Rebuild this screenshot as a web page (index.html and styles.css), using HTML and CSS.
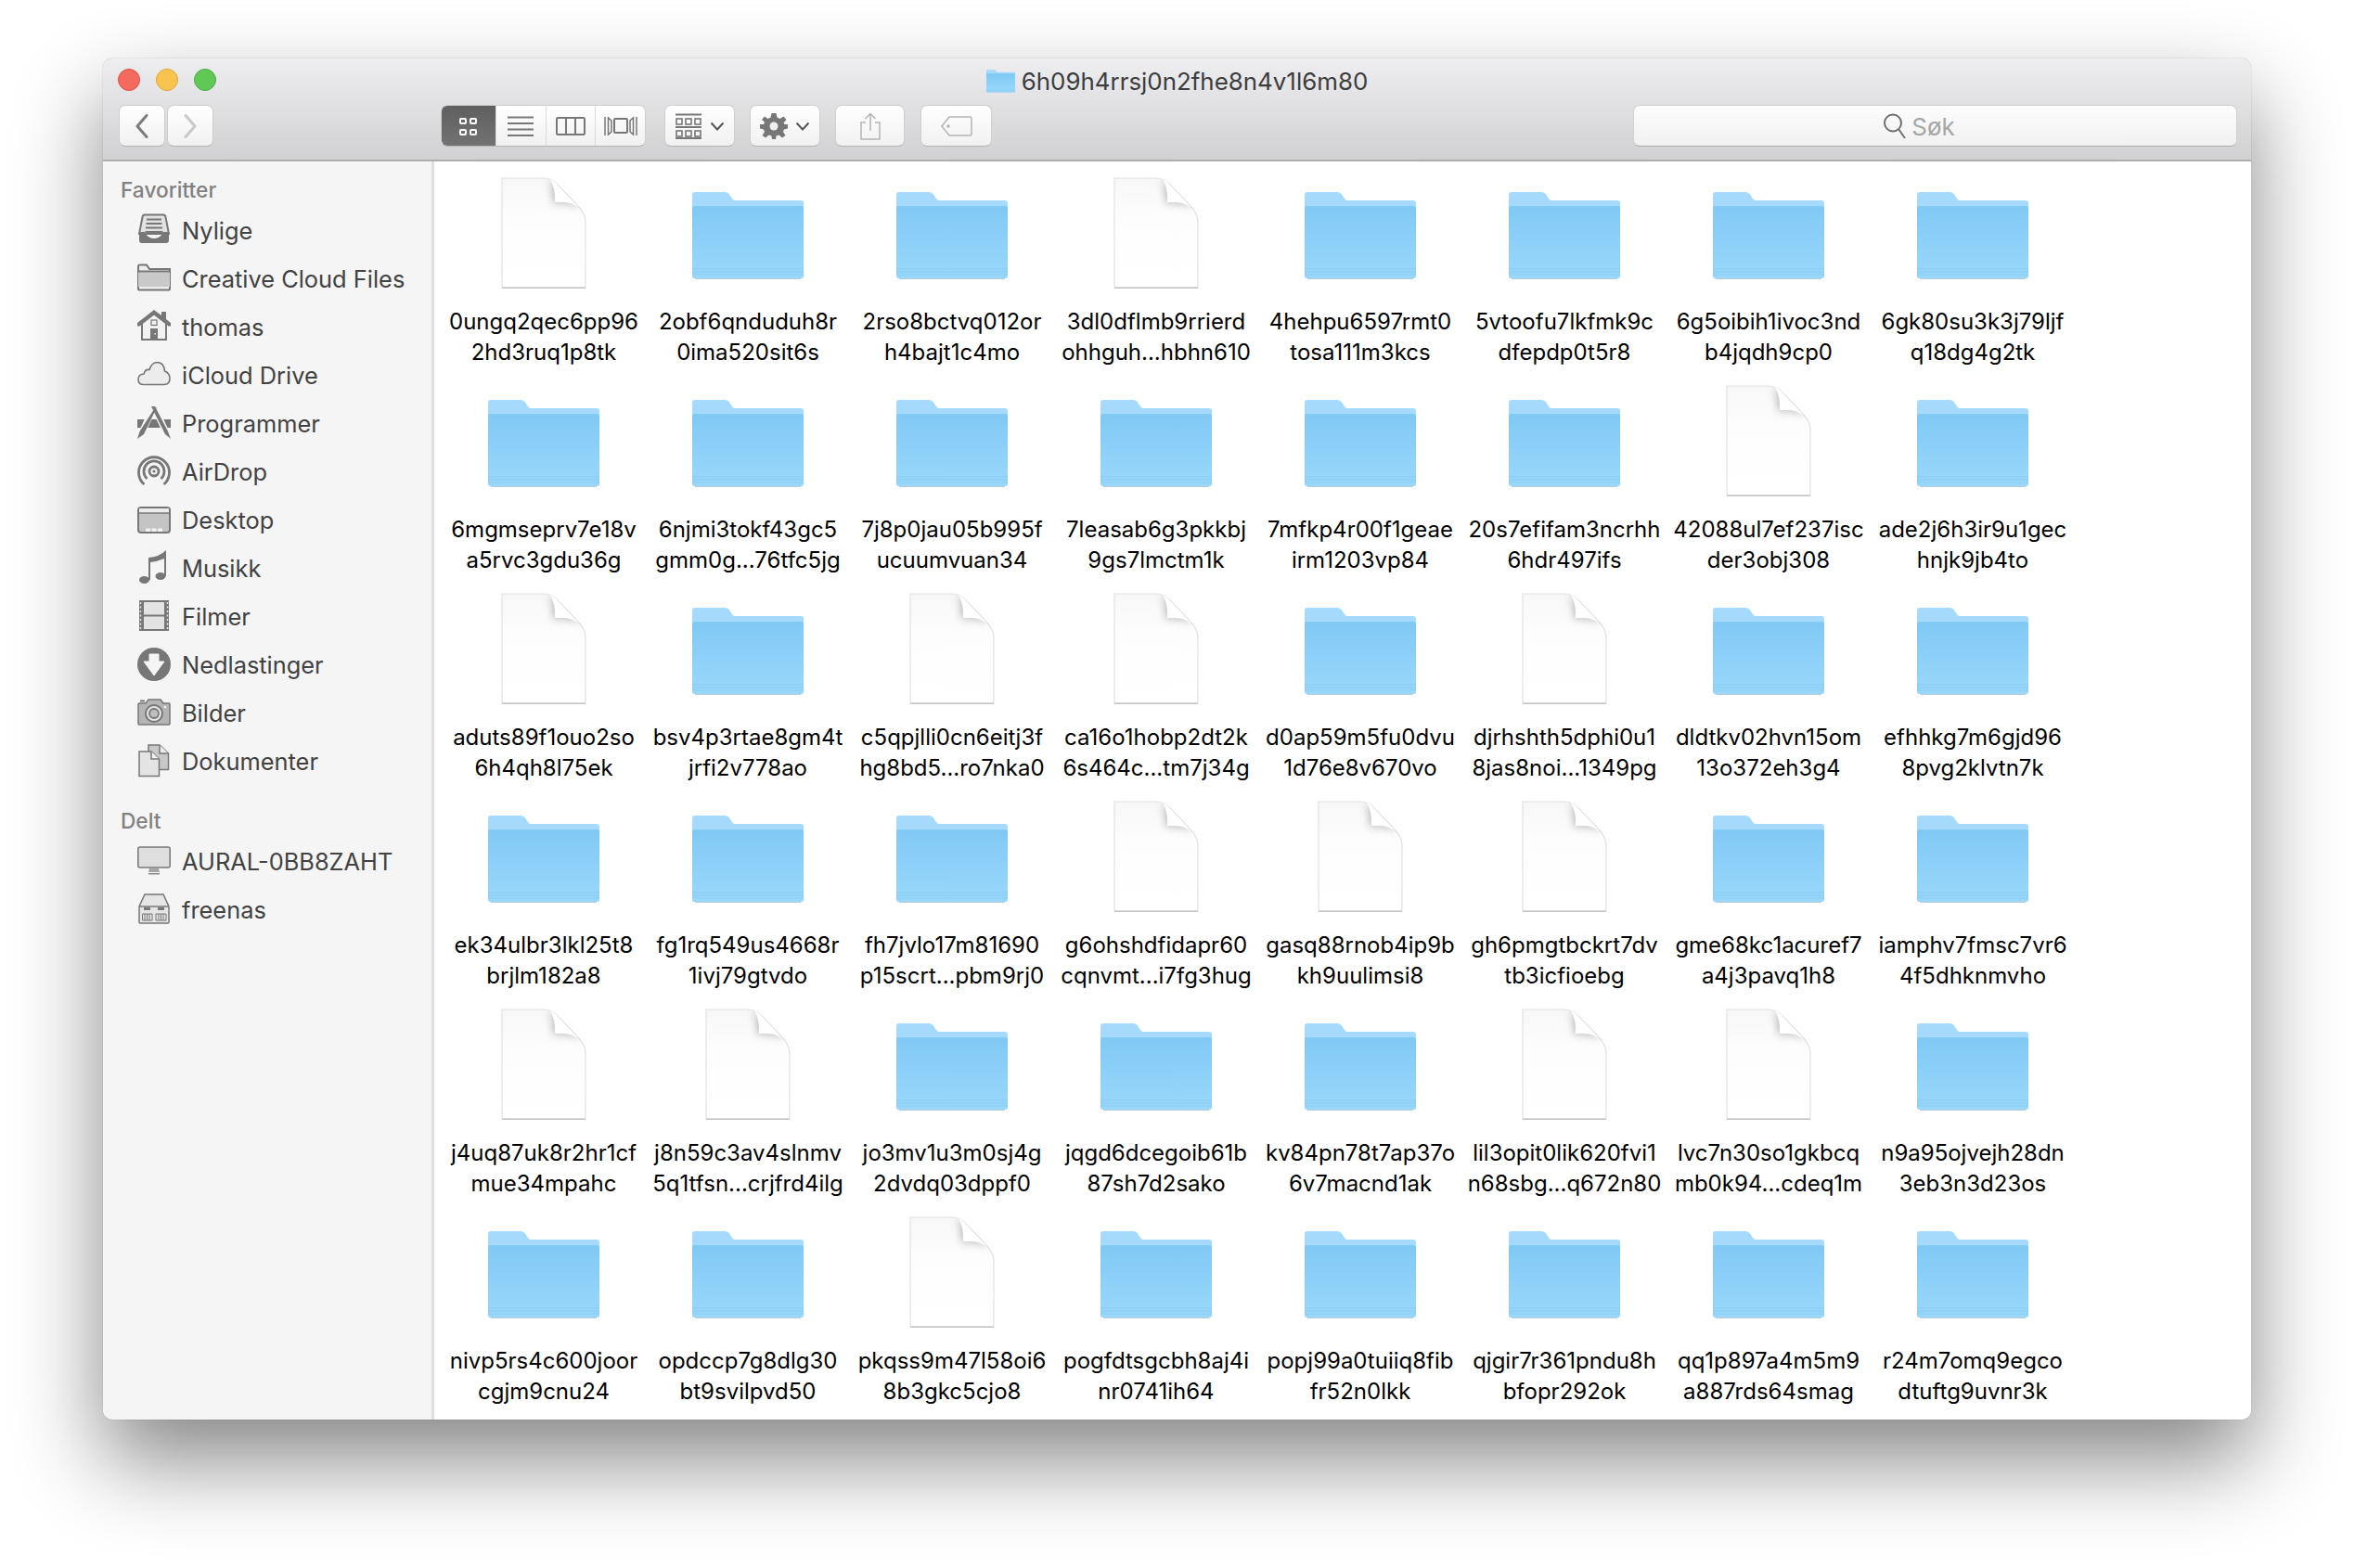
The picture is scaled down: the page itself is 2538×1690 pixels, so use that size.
FILE: index.html
```html
<!DOCTYPE html>
<html>
<head>
  <meta charset="utf-8">
  <title>6h09h4rrsj0n2fhe8n4v1l6m80</title>
  <link rel="stylesheet" href="styles.css">
</head>
<body>

<svg class="defs" width="0" height="0">
  <defs>
    <linearGradient id="fold" x1="0" y1="0" x2="0" y2="1">
      <stop offset="0" stop-color="#80c9f5"/>
      <stop offset="1" stop-color="#9ad8fb"/>
    </linearGradient>
    <linearGradient id="sheet" x1="0" y1="0" x2="0" y2="1">
      <stop offset="0" stop-color="#f7f7f7"/>
      <stop offset=".35" stop-color="#fdfdfd"/>
      <stop offset="1" stop-color="#fff"/>
    </linearGradient>
    <filter id="soft" x="-30%" y="-30%" width="160%" height="160%">
      <feGaussianBlur stdDeviation="4"/>
    </filter>
    <clipPath id="sheetclip">
      <path d="M1 1H46Q54 1 60 7L83 31Q91 39 91 49V119H1Z"/>
    </clipPath>
    <symbol id="folder" viewBox="0 0 120 96">
      <path d="M0 4Q0 1 3 1H35Q39 1 41 5L43 8Q44 10 46 10H117Q120 10 120 13V91Q120 94 117 94H3Q0 94 0 91Z" fill="#a6dafc"/>
      <path d="M0 19Q0 16 3 16H117Q120 16 120 19V91Q120 94 117 94H3Q0 94 0 91Z" fill="url(#fold)"/>
      <path d="M0 84H120M0 87H120M0 90H120" stroke="#88caf0" stroke-width="1"/>
      <path d="M3 94.500H117" stroke="#b4cddd" stroke-width="1"/>
    </symbol>
    <symbol id="file" viewBox="0 0 92 120">
      <path d="M1 1H46Q54 1 60 7L83 31Q91 39 91 49V119H1Z" fill="url(#sheet)" stroke="#e2e2e2" stroke-width="1.200"/>
      <path d="M1 119.200H91" stroke="#c4c4c4" stroke-width="1.500"/>
      <g clip-path="url(#sheetclip)">
        <path d="M52 1L60 7L86 34Q76 29 68 28H56Q57 12 52 1Z" fill="#8d8d8d" opacity=".6" filter="url(#soft)"/>
      </g>
      <path d="M53 2Q57 4 60 7L85 33Q77 27.500 68 27H58Q59 12 53 2Z" fill="#fff"/>
      <path d="M60 7L85 33" stroke="#dcdcdc" stroke-width=".8" fill="none"/>
    </symbol>
  </defs>
</svg>

<div class="window">
  <header class="toolbar">
    <div class="title">
      <svg class="title-icon" width="31" height="25"><use href="#folder"/></svg>
      <span>6h09h4rrsj0n2fhe8n4v1l6m80</span>
    </div>
    <div class="lights">
      <i class="light red"></i><i class="light yellow"></i><i class="light green"></i>
    </div>
    <div class="controls">
      <button class="btn nav">
        <svg width="20" height="28" viewBox="0 0 20 28"><path d="M15 2.500L5 14L15 25.500" class="tool-line"/></svg>
      </button>
      <button class="btn nav next">
        <svg width="20" height="28" viewBox="0 0 20 28"><path d="M5 2.500L15 14L5 25.500" class="tool-line dim"/></svg>
      </button>

      <div class="views">
        <div class="view on">
          <svg width="22" height="22" viewBox="0 0 22 22" fill="none" stroke="#fff" stroke-width="2"><rect x="2" y="3" width="6" height="5" rx="1"/><rect x="13" y="3" width="6" height="5" rx="1"/><rect x="2" y="15" width="6" height="5" rx="1"/><rect x="13" y="15" width="6" height="5" rx="1"/></svg>
        </div>
        <div class="view">
          <svg width="30" height="24" viewBox="0 0 30 24" fill="none" stroke="#777" stroke-width="2"><path d="M1 2.500H29M1 9H29M1 15.500H29M1 22H29"/></svg>
        </div>
        <div class="view">
          <svg width="32" height="22" viewBox="0 0 32 22" fill="none" stroke="#777" stroke-width="2"><rect x="1" y="2" width="30" height="18" rx="1.500"/><path d="M11 2V20M21 2V20"/></svg>
        </div>
        <div class="view">
          <svg width="36" height="22" viewBox="0 0 36 22" fill="none" stroke="#777" stroke-width="2"><rect x="11" y="3" width="14" height="15" rx="1"/><path d="M1 1V21M4.500 2V20L8 17V5ZM35 1V21M31.500 2V20L28 17V5Z" stroke-width="1.500"/></svg>
        </div>
      </div>

      <button class="btn menu arrange">
        <svg width="30" height="28" viewBox="0 0 30 28" fill="none" stroke="#777" stroke-width="1.600"><path d="M1 1.500H29M1 15H29M1 27H29" stroke-width="2"/><rect x="2" y="6" width="6" height="6"/><rect x="12" y="6" width="6" height="6"/><rect x="22" y="6" width="6" height="6"/><rect x="2" y="19" width="6" height="6"/><rect x="12" y="19" width="6" height="6"/><rect x="22" y="19" width="6" height="6"/></svg>
        <svg class="chev" width="16" height="10" viewBox="0 0 16 10"><path d="M1.500 1.500L8 8.500L14.500 1.500" fill="none" stroke="#555" stroke-width="2"/></svg>
      </button>
      <button class="btn menu action">
        <svg width="30" height="28" viewBox="0 0 30 28"><path d="M12.500 0H17.500L18.500 4.500L21.500 6L25.500 3.500L28.500 7L25.500 10.500L26.500 12H30V16.500L26 17.500L25 20L27.500 24L24 26.500L20.500 23.500L17.500 24.500L17 28H13L12.500 24.500L9.500 23.500L6 26.500L2.500 24L5 20L4 17.500L0 16.500V12H4L5 9.500L2 7L5 3.500L8.500 6L11.500 4.500Z" fill="#777"/><circle cx="15" cy="14" r="4.500" fill="#efefef"/></svg>
        <svg class="chev" width="16" height="10" viewBox="0 0 16 10"><path d="M1.500 1.500L8 8.500L14.500 1.500" fill="none" stroke="#555" stroke-width="2"/></svg>
      </button>
      <button class="btn share">
        <svg width="24" height="30" viewBox="0 0 24 30" fill="none" stroke="#b4b4b4" stroke-width="1.500"><path d="M7 11H2V29H22V11H17M12 20V1.500M6.500 7L12 1.500L17.500 7"/></svg>
      </button>
      <button class="btn tag">
        <svg width="34" height="22" viewBox="0 0 34 22" fill="none" stroke="#b4b4b4" stroke-width="1.500"><path d="M9 1H31Q33 1 33 3V19Q33 21 31 21H9L1 11Z"/><circle cx="8" cy="11" r="1" fill="#b4b4b4"/></svg>
      </button>

      <div class="search">
        <svg width="28" height="30" viewBox="0 0 28 30" fill="none" stroke="#6e6e6e" stroke-width="2"><circle cx="12" cy="11.500" r="9"/><path d="M18 18L25 28"/></svg>
        <span>Søk</span>
      </div>
    </div>
  </header>

  <div class="content">
    <nav class="sidebar">
      <h4 class="side-head">Favoritter</h4>
      <a class="side-item">
        <svg class="ico" viewBox="0 0 36 36"><path d="M8 1.500H28Q30 1.500 30.500 4L34 22H2L5.500 4Q6 1.500 8 1.500Z" fill="#e2e2e2" stroke="#777" stroke-width="2"/><path d="M10 6.500H26M9.500 11H26.500M9 15.500H27M8.500 20H27.500" stroke="#777" stroke-width="1.800"/><path d="M2 20H8Q11 27 18 27Q25 27 28 20H34V29Q34 32 31 32H5Q2 32 2 29Z" fill="#777"/></svg>
        <span>Nylige</span>
      </a>
      <a class="side-item">
        <svg class="ico" viewBox="0 0 36 36"><path d="M1 5V29.500Q1 30.500 2 30.500H34Q35 30.500 35 29.500V8H13L10 3.500H2.500Q1 3.500 1 5Z" fill="#ededed" stroke="#777" stroke-width="2"/><path d="M1 11.500H35V27H1Z" fill="#c9c9c9"/><path d="M1 10.500H35" stroke="#777" stroke-width="2"/></svg>
        <span>Creative Cloud Files</span>
      </a>
      <a class="side-item">
        <svg class="ico" viewBox="0 0 36 36"><path d="M5 14V32H31V14L18 4Z" fill="#f2f2f2" stroke="#777" stroke-width="2"/><path d="M0 14L18 0L26 6V2H31V10L36 14V17.500H33.500L18 5.500L2.500 17.500H0Z" fill="#777"/><rect x="15" y="11" width="6" height="5.500" fill="#f2f2f2" stroke="#777" stroke-width="1.200"/><rect x="14" y="20" width="8" height="12" fill="#777"/><rect x="18.500" y="25" width="1.500" height="1.500" fill="#f2f2f2"/></svg>
        <span>thomas</span>
      </a>
      <a class="side-item">
        <svg class="ico" viewBox="0 0 36 36"><path d="M7 28.500Q1 28.500 1 23Q1 17.500 7 17Q8.500 11.500 13 12.500Q15.500 4.500 21.500 4.500Q29 5 29.500 14Q35 16 35 22Q35 28.500 29 28.500Z" fill="#ececec" stroke="#777" stroke-width="1.600"/></svg>
        <span>iCloud Drive</span>
      </a>
      <a class="side-item">
        <svg class="ico" viewBox="0 0 36 36"><path d="M0 14H36V23H0Z" fill="#777"/><path d="M18.500 1L30 26" stroke="#f5f5f5" stroke-width="7" fill="none"/><path d="M17.500 1L6 26" stroke="#f5f5f5" stroke-width="7" fill="none"/><path d="M15 0H19L33 27L36 35L30 30Z" fill="#777"/><path d="M18 3L21 1L7 30L0 35L2.500 27Z" fill="#777"/></svg>
        <span>Programmer</span>
      </a>
      <a class="side-item">
        <svg class="ico" viewBox="0 0 36 36" fill="none" stroke="#777" stroke-width="2.800"><path d="M7.500 32A16.500 16.500 0 1 1 28.500 32"/><path d="M10.500 26A11 11 0 1 1 25.500 26"/><circle cx="18" cy="18" r="5"/><circle cx="18" cy="18" r="1.600" fill="#777" stroke="none"/></svg>
        <span>AirDrop</span>
      </a>
      <a class="side-item">
        <svg class="ico" viewBox="0 0 36 36"><rect x="1" y="5" width="34" height="27" rx="3" fill="#c4c4c4" stroke="#777" stroke-width="2"/><path d="M2 6H34V11H2Z" fill="#ececec"/><path d="M1 11H35" stroke="#777" stroke-width="1.500"/><path d="M9 27.500H14V31H9ZM15.500 27.500H20.500V31H15.500ZM22 27.500H27V31H22Z" fill="#f2f2f2"/></svg>
        <span>Desktop</span>
      </a>
      <a class="side-item">
        <svg class="ico" viewBox="0 0 36 36"><path d="M12 7Q24 6 31 -1V27H29V8Q22 11 14 12V31H12Z" fill="#777"/><ellipse cx="7.500" cy="31" rx="5.500" ry="4" fill="#777"/><ellipse cx="25" cy="27" rx="5.500" ry="4" fill="#777"/></svg>
        <span>Musikk</span>
      </a>
      <a class="side-item">
        <svg class="ico" viewBox="0 0 36 36"><rect x="2" y="1" width="32" height="33" fill="#777"/><rect x="7" y="3" width="22" height="13.500" fill="#e3e3e3"/><rect x="7" y="18.500" width="22" height="13.500" fill="#e3e3e3"/><path d="M3.500 3V33M32.500 3V33" stroke="#e3e3e3" stroke-width="1.500" stroke-dasharray="2 2.500"/></svg>
        <span>Filmer</span>
      </a>
      <a class="side-item">
        <svg class="ico" viewBox="0 0 36 36"><circle cx="18" cy="18" r="18" fill="#777"/><path d="M13 7H23V15H29L18 30L7 15H13Z" fill="#f5f5f5" stroke="#f5f5f5" stroke-linejoin="round"/></svg>
        <span>Nedlastinger</span>
      </a>
      <a class="side-item">
        <svg class="ico" viewBox="0 0 36 36"><path d="M2 8H9L12 4H25L28 8H34Q35 8 35 9V30Q35 31 34 31H2Q1 31 1 30V9Q1 8 2 8Z" fill="#b5b5b5" stroke="#777" stroke-width="1.500"/><path d="M3 4.500H8V6.500H3Z" fill="#777"/><circle cx="18" cy="19" r="9" fill="#e4e4e4" stroke="#777" stroke-width="2"/><circle cx="18" cy="19" r="5" fill="#bdbdbd" stroke="#777" stroke-width="1.800"/><circle cx="30" cy="12" r="1.200" fill="#f5f5f5"/></svg>
        <span>Bilder</span>
      </a>
      <a class="side-item">
        <svg class="ico" viewBox="0 0 36 36"><path d="M12 1H24L33.500 10V27.500H12Z" fill="#c8c8c8" stroke="#777" stroke-width="1.500"/><path d="M24 1V10H33.500" fill="#ececec" stroke="#777" stroke-width="1.500"/><path d="M2 8H15L23.500 16V34.500H2Z" fill="#e4e4e4" stroke="#777" stroke-width="1.500"/><path d="M15 8V16H23.500" fill="#f5f5f5" stroke="#777" stroke-width="1.500"/></svg>
        <span>Dokumenter</span>
      </a>

      <h4 class="side-head shared">Delt</h4>
      <a class="side-item">
        <svg class="ico" viewBox="0 0 36 36"><rect x="0.800" y="3" width="34.400" height="22" rx="2" fill="#dedede" stroke="#777" stroke-width="1.500"/><path d="M13 26H23L24 30H12Z" fill="#a5a5a5"/><path d="M12 31H24V32.500H12Z" fill="#8a8a8a"/></svg>
        <span>AURAL-0BB8ZAHT</span>
      </a>
      <a class="side-item">
        <svg class="ico" viewBox="0 0 36 36"><path d="M8 2H28L34 15V32Q34 33 33 33H3Q2 33 2 32V15Z" fill="#e6e6e6" stroke="#777" stroke-width="1.500"/><path d="M2 15H34" stroke="#777" stroke-width="1.500"/><path d="M7 16H14V19H7ZM22 16H29V19H22Z" fill="#777"/><path d="M5.500 23H16V30H5.500ZM20 23H31V30H20Z" fill="none" stroke="#777"/><path d="M8 23V30M10.500 23V30M13 23V30M23 23V30M25.500 23V30M28 23V30" stroke="#777"/></svg>
        <span>freenas</span>
      </a>
    </nav>

    <main class="grid">
      <div class="item"><svg class="doc" width="92" height="120"><use href="#file"/></svg><p>0ungq2qec6pp96<br>2hd3ruq1p8tk</p></div>
      <div class="item"><svg class="dir" width="120" height="96"><use href="#folder"/></svg><p>2obf6qnduduh8r<br>0ima520sit6s</p></div>
      <div class="item"><svg class="dir" width="120" height="96"><use href="#folder"/></svg><p>2rso8bctvq012or<br>h4bajt1c4mo</p></div>
      <div class="item"><svg class="doc" width="92" height="120"><use href="#file"/></svg><p>3dl0dflmb9rrierd<br>ohhguh...hbhn610</p></div>
      <div class="item"><svg class="dir" width="120" height="96"><use href="#folder"/></svg><p>4hehpu6597rmt0<br>tosa111m3kcs</p></div>
      <div class="item"><svg class="dir" width="120" height="96"><use href="#folder"/></svg><p>5vtoofu7lkfmk9c<br>dfepdp0t5r8</p></div>
      <div class="item"><svg class="dir" width="120" height="96"><use href="#folder"/></svg><p>6g5oibih1ivoc3nd<br>b4jqdh9cp0</p></div>
      <div class="item"><svg class="dir" width="120" height="96"><use href="#folder"/></svg><p>6gk80su3k3j79ljf<br>q18dg4g2tk</p></div>

      <div class="item"><svg class="dir" width="120" height="96"><use href="#folder"/></svg><p>6mgmseprv7e18v<br>a5rvc3gdu36g</p></div>
      <div class="item"><svg class="dir" width="120" height="96"><use href="#folder"/></svg><p>6njmi3tokf43gc5<br>gmm0g...76tfc5jg</p></div>
      <div class="item"><svg class="dir" width="120" height="96"><use href="#folder"/></svg><p>7j8p0jau05b995f<br>ucuumvuan34</p></div>
      <div class="item"><svg class="dir" width="120" height="96"><use href="#folder"/></svg><p>7leasab6g3pkkbj<br>9gs7lmctm1k</p></div>
      <div class="item"><svg class="dir" width="120" height="96"><use href="#folder"/></svg><p>7mfkp4r00f1geae<br>irm1203vp84</p></div>
      <div class="item"><svg class="dir" width="120" height="96"><use href="#folder"/></svg><p>20s7efifam3ncrhh<br>6hdr497ifs</p></div>
      <div class="item"><svg class="doc" width="92" height="120"><use href="#file"/></svg><p>42088ul7ef237isc<br>der3obj308</p></div>
      <div class="item"><svg class="dir" width="120" height="96"><use href="#folder"/></svg><p>ade2j6h3ir9u1gec<br>hnjk9jb4to</p></div>

      <div class="item"><svg class="doc" width="92" height="120"><use href="#file"/></svg><p>aduts89f1ouo2so<br>6h4qh8l75ek</p></div>
      <div class="item"><svg class="dir" width="120" height="96"><use href="#folder"/></svg><p>bsv4p3rtae8gm4t<br>jrfi2v778ao</p></div>
      <div class="item"><svg class="doc" width="92" height="120"><use href="#file"/></svg><p>c5qpjlli0cn6eitj3f<br>hg8bd5...ro7nka0</p></div>
      <div class="item"><svg class="doc" width="92" height="120"><use href="#file"/></svg><p>ca16o1hobp2dt2k<br>6s464c...tm7j34g</p></div>
      <div class="item"><svg class="dir" width="120" height="96"><use href="#folder"/></svg><p>d0ap59m5fu0dvu<br>1d76e8v670vo</p></div>
      <div class="item"><svg class="doc" width="92" height="120"><use href="#file"/></svg><p>djrhshth5dphi0u1<br>8jas8noi...1349pg</p></div>
      <div class="item"><svg class="dir" width="120" height="96"><use href="#folder"/></svg><p>dldtkv02hvn15om<br>13o372eh3g4</p></div>
      <div class="item"><svg class="dir" width="120" height="96"><use href="#folder"/></svg><p>efhhkg7m6gjd96<br>8pvg2klvtn7k</p></div>

      <div class="item"><svg class="dir" width="120" height="96"><use href="#folder"/></svg><p>ek34ulbr3lkl25t8<br>brjlm182a8</p></div>
      <div class="item"><svg class="dir" width="120" height="96"><use href="#folder"/></svg><p>fg1rq549us4668r<br>1ivj79gtvdo</p></div>
      <div class="item"><svg class="dir" width="120" height="96"><use href="#folder"/></svg><p>fh7jvlo17m81690<br>p15scrt...pbm9rj0</p></div>
      <div class="item"><svg class="doc" width="92" height="120"><use href="#file"/></svg><p>g6ohshdfidapr60<br>cqnvmt...i7fg3hug</p></div>
      <div class="item"><svg class="doc" width="92" height="120"><use href="#file"/></svg><p>gasq88rnob4ip9b<br>kh9uulimsi8</p></div>
      <div class="item"><svg class="doc" width="92" height="120"><use href="#file"/></svg><p>gh6pmgtbckrt7dv<br>tb3icfioebg</p></div>
      <div class="item"><svg class="dir" width="120" height="96"><use href="#folder"/></svg><p>gme68kc1acuref7<br>a4j3pavq1h8</p></div>
      <div class="item"><svg class="dir" width="120" height="96"><use href="#folder"/></svg><p>iamphv7fmsc7vr6<br>4f5dhknmvho</p></div>

      <div class="item"><svg class="doc" width="92" height="120"><use href="#file"/></svg><p>j4uq87uk8r2hr1cf<br>mue34mpahc</p></div>
      <div class="item"><svg class="doc" width="92" height="120"><use href="#file"/></svg><p>j8n59c3av4slnmv<br>5q1tfsn...crjfrd4ilg</p></div>
      <div class="item"><svg class="dir" width="120" height="96"><use href="#folder"/></svg><p>jo3mv1u3m0sj4g<br>2dvdq03dppf0</p></div>
      <div class="item"><svg class="dir" width="120" height="96"><use href="#folder"/></svg><p>jqgd6dcegoib61b<br>87sh7d2sako</p></div>
      <div class="item"><svg class="dir" width="120" height="96"><use href="#folder"/></svg><p>kv84pn78t7ap37o<br>6v7macnd1ak</p></div>
      <div class="item"><svg class="doc" width="92" height="120"><use href="#file"/></svg><p>lil3opit0lik620fvi1<br>n68sbg...q672n80</p></div>
      <div class="item"><svg class="doc" width="92" height="120"><use href="#file"/></svg><p>lvc7n30so1gkbcq<br>mb0k94...cdeq1m</p></div>
      <div class="item"><svg class="dir" width="120" height="96"><use href="#folder"/></svg><p>n9a95ojvejh28dn<br>3eb3n3d23os</p></div>

      <div class="item"><svg class="dir" width="120" height="96"><use href="#folder"/></svg><p>nivp5rs4c600joor<br>cgjm9cnu24</p></div>
      <div class="item"><svg class="dir" width="120" height="96"><use href="#folder"/></svg><p>opdccp7g8dlg30<br>bt9svilpvd50</p></div>
      <div class="item"><svg class="doc" width="92" height="120"><use href="#file"/></svg><p>pkqss9m47l58oi6<br>8b3gkc5cjo8</p></div>
      <div class="item"><svg class="dir" width="120" height="96"><use href="#folder"/></svg><p>pogfdtsgcbh8aj4i<br>nr0741ih64</p></div>
      <div class="item"><svg class="dir" width="120" height="96"><use href="#folder"/></svg><p>popj99a0tuiiq8fib<br>fr52n0lkk</p></div>
      <div class="item"><svg class="dir" width="120" height="96"><use href="#folder"/></svg><p>qjgir7r361pndu8h<br>bfopr292ok</p></div>
      <div class="item"><svg class="dir" width="120" height="96"><use href="#folder"/></svg><p>qq1p897a4m5m9<br>a887rds64smag</p></div>
      <div class="item"><svg class="dir" width="120" height="96"><use href="#folder"/></svg><p>r24m7omq9egco<br>dtuftg9uvnr3k</p></div>
    </main>
  </div>
</div>

</body>
</html>
```

FILE: styles.css
```css
html, body { margin: 0; background: #fff; }
body { padding: 63px 0 0 111px; font-family: Inter, "Liberation Sans", sans-serif; height: 1690px; box-sizing: border-box; overflow: hidden; }
.defs { position: absolute; }

.window { position: relative; width: 2315px; height: 1467px; border-radius: 10px; background: #f5f5f5; box-shadow: 0 44px 95px rgba(0,0,0,.48), 0 0 1px rgba(0,0,0,.45); display: flex; flex-direction: column; overflow: hidden; }

.toolbar { position: relative; height: 111px; box-sizing: border-box; padding-top: 50px; background: linear-gradient(#eeedef, #d1d0d2); border-bottom: 2px solid #aeaeae; flex: none; }

.lights { position: absolute; left: 16px; top: 11px; display: flex; gap: 17px; }
.light { width: 24px; height: 24px; border-radius: 50%; box-sizing: border-box; border: 1px solid; }
.red { background: #f46a5f; border-color: #df5047; }
.yellow { background: #f9c44e; border-color: #e0a63b; }
.green { background: #60c956; border-color: #4aad42; }

.title { position: absolute; left: 0; right: 0; top: 10px; height: 28px; display: flex; justify-content: center; align-items: center; gap: 7px; font-size: 25.900px; color: #3d3d3d; }

.controls { display: flex; padding: 0 15px 0 17px; }
.btn { display: flex; align-items: center; justify-content: center; height: 45px; padding: 0; box-sizing: border-box; background: linear-gradient(#fff, #f1f1f1); border: 1px solid #cecece; border-bottom-color: #b3b3b3; border-radius: 7px; }
.nav { width: 50px; }
.next { margin-left: 2px; }
.tool-line { fill: none; stroke: #7c7c7c; stroke-width: 3; stroke-linecap: round; stroke-linejoin: round; }
.dim { stroke: #c9c9c9; }

.views { display: flex; margin-left: 245px; width: 221px; height: 45px; box-sizing: border-box; border: 1px solid #cecece; border-bottom-color: #b3b3b3; border-radius: 7px; background: linear-gradient(#fff, #f1f1f1); overflow: hidden; }
.view { display: flex; align-items: center; justify-content: center; flex: 1; border-left: 1px solid #dcdcdc; }
.view:first-child { border-left: 0; flex: none; width: 59px; margin: -1px 0 -1px -1px; }
.on { background: linear-gradient(#5f5f5f, #737373); }

.menu { width: 76px; gap: 8px; }
.arrange { margin-left: 20px; }
.action { margin-left: 16px; }
.share { margin-left: 16px; width: 75px; }
.tag { margin-left: 17px; width: 77px; }

.search { margin-left: auto; width: 651px; height: 45px; box-sizing: border-box; display: flex; align-items: center; justify-content: center; gap: 4px; padding: 1px 36px 0 0; background: linear-gradient(#fdfdfd, #f1f1f1); border: 1px solid #d0d0d0; border-bottom-color: #adadad; border-radius: 7px; font-size: 26px; color: #a6a6a6; }

.content { flex: 1; display: flex; min-height: 0; }

.sidebar { width: 357px; box-sizing: border-box; flex: none; padding: 17px 0 0 19px; background: #f5f5f5; border-right: 3px solid #dfdfdf; }
.side-head { margin: 0; height: 28px; line-height: 28px; font-size: 22.700px; font-weight: 500; color: #818181; }
.shared { margin-top: 25px; }
.side-item { display: flex; align-items: center; height: 52px; padding-left: 18px; font-size: 25.400px; color: #424242; white-space: nowrap; }
.side-head + .side-item { margin-top: 3px; }
.ico { width: 36px; height: 36px; flex: none; margin-right: 12px; overflow: visible; }

.grid { flex: 1; display: grid; grid-template-columns: repeat(8, 220px); grid-auto-rows: 224px; padding: 17px 0 0 8px; background: #fff; }
.item { display: flex; flex-direction: column; align-items: center; }
.item svg { flex: none; }
.doc { margin-top: 0; }
.dir { margin-top: 15px; margin-bottom: 9px; }
.item p { margin: 20px 0 0; font-size: 24px; line-height: 32.500px; color: #000; text-align: center; white-space: nowrap; }
```
